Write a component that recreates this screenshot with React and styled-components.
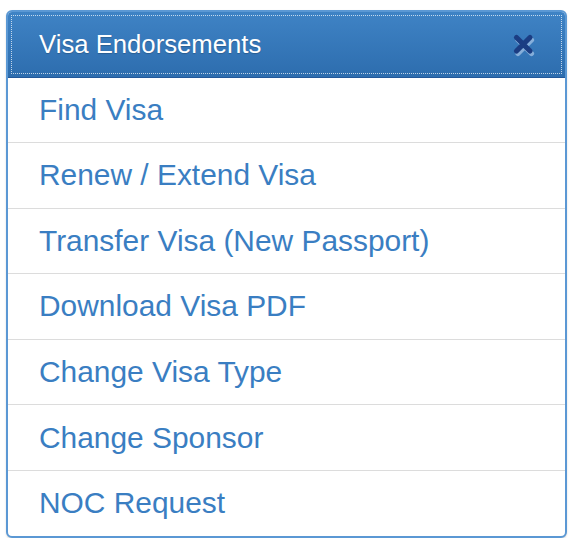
import React from "react";
import styled, { createGlobalStyle } from "styled-components";

const GlobalStyle = createGlobalStyle`
  body {
    margin: 0;
    background: #ffffff;
    font-family: "Liberation Sans", Arial, sans-serif;
  }
`;

const Page = styled.div`
  padding: 10px 4px 0 6px;
`;

const Panel = styled.div`
  border: 2px solid #5b98d4;
  border-radius: 6px;
  overflow: hidden;
  background: #fff;
  box-shadow: 0 1px 2px rgba(0, 0, 0, 0.15);
`;

const Header = styled.div`
  position: relative;
  height: 65px;
  display: flex;
  align-items: center;
  justify-content: space-between;
  padding: 0 29px 0 31px;
  background: linear-gradient(to bottom, #3f83c5 0%, #2d6dae 100%);
  border-bottom: 1px solid #22589a;
  color: #fff;
  font-size: 25.7px;

  &::after {
    content: "";
    position: absolute;
    inset: 3px 3px 3px 3px;
    border: 1px dotted rgba(255, 255, 255, 0.7);
    pointer-events: none;
  }
`;

const Title = styled.span`
  text-shadow: 0 1px 1px rgba(0, 0, 0, 0.2);
`;

const Close = styled.button`
  border: 0;
  background: none;
  padding: 0;
  display: flex;
  cursor: pointer;
`;

const List = styled.ul`
  list-style: none;
  margin: 0;
  padding: 0;
`;

const Item = styled.li`
  height: ${(p) => (p.first ? "64px" : "65.6px")};
  box-sizing: border-box;
  border-top: ${(p) => (p.first ? "none" : "1px solid #dcdcdc")};
  display: flex;
  align-items: center;
  padding-left: 31px;
  font-size: 29.9px;
  color: #3a7ec2;
  cursor: pointer;
`;

const items = [
  "Find Visa",
  "Renew / Extend Visa",
  "Transfer Visa (New Passport)",
  "Download Visa PDF",
  "Change Visa Type",
  "Change Sponsor",
  "NOC Request",
];

function CloseIcon() {
  return (
    <svg width="24" height="24" viewBox="0 0 24 24">
      <g strokeWidth="5.2" strokeLinecap="round">
        <path d="M6 7 L19.5 20.5 M19.5 7 L6 20.5" stroke="rgba(200,220,245,0.55)" />
        <path d="M4.5 4.5 L18 18 M18 4.5 L4.5 18" stroke="#1b3d83" />
      </g>
    </svg>
  );
}

function App() {
  return (
    <>
      <GlobalStyle />
      <Page>
        <Panel>
          <Header>
            <Title>Visa Endorsements</Title>
            <Close aria-label="close">
              <CloseIcon />
            </Close>
          </Header>
          <List>
            {items.map((label, i) => (
              <Item key={label} first={i === 0}>
                {label}
              </Item>
            ))}
          </List>
        </Panel>
      </Page>
    </>
  );
}

export default App;
